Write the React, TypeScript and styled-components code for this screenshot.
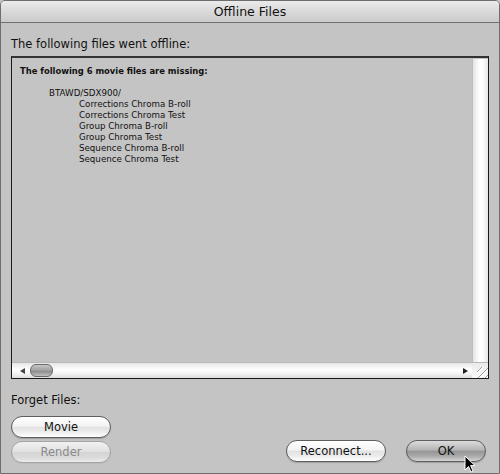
import styled, { createGlobalStyle } from "styled-components"

const GlobalStyle = createGlobalStyle`
    html, body {
        margin: 0;
        padding: 0;
        background: #c4c4c4;
    }
    body {
        font-family: "DejaVu Sans", "Liberation Sans", sans-serif;
    }
`;

const Window = styled.div`
    position: relative;
    width: 500px;
    height: 474px;
    box-sizing: border-box;
    border: 1px solid #6e6e6e;
    border-radius: 5px 5px 0 0;
    background: #c4c4c4;
    display: flex;
    flex-direction: column;
    overflow: hidden;
`;

const TitleBar = styled.div`
    height: 21px;
    flex: none;
    display: flex;
    align-items: center;
    justify-content: center;
    background: linear-gradient(#ebebeb, #d9d9d9 50%, #cbcbcb);
    border-bottom: 1px solid #717171;
    font-size: 12.5px;
    color: #111;
`;

const Body = styled.div`
    flex: 1;
    display: flex;
    flex-direction: column;
    padding: 0 10px 0 10px;
`;

const Heading = styled.div`
    font-size: 11.5px;
    color: #111;
    margin-top: 14px;
    height: 19px;
`;

const ListBox = styled.div`
    height: 323px;
    box-sizing: border-box;
    border: 1px solid #1a1a1a;
    border-top: 2px solid #333;
    display: grid;
    grid-template-columns: 1fr 16px;
    grid-template-rows: 1fr 16px;
    background: #c4c4c4;
`;

const ListContent = styled.div`
    padding: 8px 0 0 8px;
    font-size: 8.7px;
    line-height: 11px;
    color: #111;
`;

const Missing = styled.div`
    font-weight: bold;
    font-size: 8.4px;
    margin-bottom: 11px;
`;

const PathLine = styled.div<{ indent: number }>`
    padding-left: ${props => props.indent}px;
    white-space: nowrap;
`;

const VScroll = styled.div`
    margin-top: 1px;
    background: linear-gradient(90deg, #e4e4e4, #fdfdfd 40%, #fff 60%, #e8e8e8);
    border-left: 1px solid #bcbcbc;
`;

const HScroll = styled.div`
    display: flex;
    align-items: center;
    gap: 5px;
    padding: 0 4px 0 8px;
    background: linear-gradient(#e6e6e6, #fff 45%, #f4f4f4 70%, #dedede);
    border-top: 1px solid #b8b8b8;
`;

const Arrow = styled.span<{ dir: "left" | "right" }>`
    width: 0;
    height: 0;
    border-top: 3px solid transparent;
    border-bottom: 3px solid transparent;
    ${props => props.dir === "left"
        ? "border-right: 5px solid #444;"
        : "border-left: 5px solid #222; margin-left: auto;"}
`;

const Thumb = styled.span`
    width: 23px;
    height: 13px;
    border-radius: 6px;
    border: 1px solid #6a6a6a;
    box-sizing: border-box;
    background: linear-gradient(#c8c8c8, #9e9e9e 50%, #8a8a8a 55%, #bfbfbf);
`;

const Corner = styled.div`
    border-top: 1px solid #b8b8b8;
    background:
        repeating-linear-gradient(135deg, transparent 0 3px, #9a9a9a 3px 4px, #fff 4px 5px) right bottom / 11px 11px no-repeat,
        linear-gradient(#eaeaea, #fafafa);
`;

const ForgetLabel = styled.div`
    font-size: 11.5px;
    color: #111;
    margin-top: 14px;
    height: 15px;
`;

const ButtonRow = styled.div`
    display: flex;
    align-items: flex-end;
    margin-top: 8px;
`;

const LeftButtons = styled.div`
    display: flex;
    flex-direction: column;
    gap: 3px;
`;

const RightButtons = styled.div`
    display: flex;
    gap: 20px;
    margin-left: auto;
    margin-right: 3px;
    margin-bottom: 1px;
`;

const AquaButton = styled.button<{ width: number; variant?: "default" | "disabled" }>`
    width: ${props => props.width}px;
    height: 22px;
    border-radius: 11px;
    box-sizing: border-box;
    font-family: "DejaVu Sans", "Liberation Sans", sans-serif;
    font-size: 11.5px;
    padding: 0;
    border: 1px solid ${props => props.variant === "disabled" ? "#a4a4a4" : "#5e5e5e"};
    color: ${props => props.variant === "disabled" ? "#8a8a8a" : "#111"};
    background: ${props => props.variant === "default"
        ? "linear-gradient(#dcdcdc, #b4b4b4 45%, #979797 52%, #a9a9a9 75%, #d4d4d4)"
        : props.variant === "disabled"
            ? "linear-gradient(#f2f2f2, #e0e0e0 48%, #d4d4d4 52%, #dcdcdc 80%, #ececec)"
            : "linear-gradient(#ffffff, #f3f3f3 45%, #e2e2e2 52%, #ececec 75%, #ffffff)"};
    box-shadow: 0 1px 1px rgba(0, 0, 0, ${props => props.variant === "disabled" ? 0.05 : 0.18});
`;

const Cursor = styled.svg`
    position: absolute;
    left: 463px;
    top: 454px;
`;

const files = [
    "Corrections Chroma B-roll",
    "Corrections Chroma Test",
    "Group Chroma B-roll",
    "Group Chroma Test",
    "Sequence Chroma B-roll",
    "Sequence Chroma Test",
];

export default function App() {
    return (
        <>
            <GlobalStyle />
            <Window>
                <TitleBar>Offline Files</TitleBar>
                <Body>
                    <Heading>The following files went offline:</Heading>
                    <ListBox>
                        <ListContent>
                            <Missing>The following 6 movie files are missing:</Missing>
                            <PathLine indent={29}>BTAWD/SDX900/</PathLine>
                            {files.map(f => (
                                <PathLine key={f} indent={59}>{f}</PathLine>
                            ))}
                        </ListContent>
                        <VScroll />
                        <HScroll>
                            <Arrow dir="left" />
                            <Thumb />
                            <Arrow dir="right" />
                        </HScroll>
                        <Corner />
                    </ListBox>
                    <ForgetLabel>Forget Files:</ForgetLabel>
                    <ButtonRow>
                        <LeftButtons>
                            <AquaButton width={100}>Movie</AquaButton>
                            <AquaButton width={100} variant="disabled">Render</AquaButton>
                        </LeftButtons>
                        <RightButtons>
                            <AquaButton width={100}>Reconnect...</AquaButton>
                            <AquaButton width={80} variant="default">OK</AquaButton>
                        </RightButtons>
                    </ButtonRow>
                </Body>
                <Cursor width="12" height="19" viewBox="0 0 12 19">
                    <path d="M1 1 L1 15 L4.5 11.5 L7 17 L9 16 L6.6 10.6 L11 10.6 Z" fill="#000" stroke="#fff" strokeWidth="1" />
                </Cursor>
            </Window>
        </>
    );
}
